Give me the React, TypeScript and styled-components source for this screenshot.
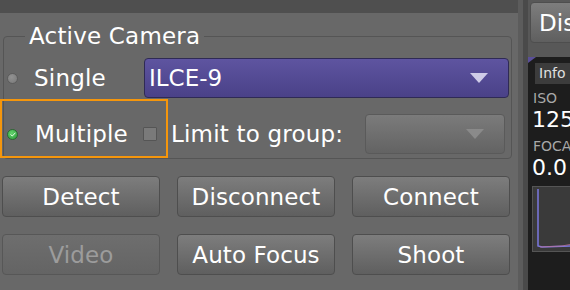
import React from "react";
import styled, { createGlobalStyle, css } from "styled-components";

const Global = createGlobalStyle`
  html, body { margin: 0; padding: 0; overflow: hidden; background: #676767; }
  body { font-family: "DejaVu Sans", "Liberation Sans", sans-serif; }
`;

const Screen = styled.div`
  display: flex;
  width: 570px;
  height: 290px;
  overflow: hidden;
`;

const LeftPanel = styled.div`
  position: relative;
  width: 518px;
  flex: none;
  display: flex;
  flex-direction: column;
  background: #686868;
`;

const TopBar = styled.div`
  height: 13px;
  background: #4f4f4f;
`;

const GroupBox = styled.fieldset`
  margin: 10px 6px 0 3px;
  padding: 9px 2px 4px 3px;
  border: 1px solid #555555;
  border-radius: 4px;
  min-width: 0;
  display: flex;
  flex-direction: column;
  gap: 16px;
`;

const Legend = styled.legend`
  margin-left: 18px;
  padding: 0 4px;
  font-size: 23px;
  line-height: 26px;
  color: #ffffff;
  letter-spacing: 0.2px;
`;

const Row = styled.div`
  display: flex;
  align-items: center;
  height: 40px;
`;

const Radio = styled.span<{ $checked?: boolean }>`
  width: 11px;
  height: 11px;
  border-radius: 50%;
  flex: none;
  box-sizing: border-box;
  display: flex;
  align-items: center;
  justify-content: center;
  ${(p) =>
    p.$checked
      ? css`
          background: radial-gradient(circle at 40% 35%, #62d46c, #2c9a3a);
          border: 1px solid #2a6a30;
        `
      : css`
          background: radial-gradient(circle at 40% 35%, #929292, #787878);
          border: 1px solid #5c5c5c;
        `}
`;

const Label = styled.span<{ $w: number; $ml: number }>`
  width: ${(p) => p.$w}px;
  margin-left: ${(p) => p.$ml}px;
  flex: none;
  font-size: 23px;
  letter-spacing: 0.2px;
  color: #ffffff;
  white-space: nowrap;
`;

const Combo = styled.div<{ $disabled?: boolean; $w?: number }>`
  ${(p) => (p.$w ? `width: ${p.$w}px; flex: none;` : "flex: 1;")}
  height: 40px;
  box-sizing: border-box;
  border-radius: 4px;
  display: flex;
  align-items: center;
  padding: 0 20px 0 4px;
  font-size: 23px;
  color: #ffffff;
  ${(p) =>
    p.$disabled
      ? css`
          background: linear-gradient(#7b7b7b, #636363);
          border: 1px solid #5a5a5a;
        `
      : css`
          background: linear-gradient(#5e54a0, #4a4188);
          border: 1px solid #2f2a55;
        `}
`;

const ComboText = styled.span`
  flex: 1;
`;

const Arrow = styled.span<{ $disabled?: boolean }>`
  width: 0;
  height: 0;
  border-left: 9px solid transparent;
  border-right: 9px solid transparent;
  border-top: 10px solid ${(p) => (p.$disabled ? "#8a8a8a" : "#cfcce8")};
`;

const CheckBox = styled.span`
  width: 14px;
  height: 14px;
  box-sizing: border-box;
  flex: none;
  background: #7a7a7a;
  border: 1px solid #555555;
  border-radius: 1px;
`;

const Highlight = styled.div`
  position: absolute;
  left: 0;
  top: 99px;
  width: 168px;
  height: 59px;
  box-sizing: border-box;
  border: 2px solid #f5960c;
  pointer-events: none;
`;

const ButtonGrid = styled.div`
  display: grid;
  grid-template-columns: repeat(3, 158px);
  grid-auto-rows: 41px;
  column-gap: 17px;
  row-gap: 17px;
  margin: 17px 0 0 2px;
`;

const Button = styled.div<{ $disabled?: boolean }>`
  box-sizing: border-box;
  border-radius: 4px;
  display: flex;
  align-items: center;
  justify-content: center;
  font-size: 23px;
  letter-spacing: 0.1px;
  white-space: nowrap;
  ${(p) =>
    p.$disabled
      ? css`
          background: linear-gradient(#6e6e6e, #646464);
          border: 1px solid #575757;
          color: #9c9c9c;
        `
      : css`
          background: linear-gradient(#7d7d7d, #5f5f5f);
          border: 1px solid #4e4e4e;
          color: #ffffff;
        `}
`;

const Divider = styled.div`
  width: 10px;
  flex: none;
  background: linear-gradient(to right, #5c5c5c 0 5px, #4a4a4a 5px 10px);
`;

const RightPanel = styled.div`
  flex: none;
  width: 120px;
  display: flex;
  flex-direction: column;
  background: #585858;
`;

const TopButton = styled(Button)`
  height: 41px;
  margin: 2px 0 0 2px;
  justify-content: flex-start;
  padding-left: 8px;
`;

const Viewer = styled.div`
  position: relative;
  margin-top: 14px;
  flex: 1;
  background: #1d1d1d;
  display: flex;
  flex-direction: column;
  padding: 6px 0 0 5px;
`;

const Corner = styled.div`
  position: absolute;
  left: 0;
  top: 0;
  width: 0;
  height: 0;
  border-top: 6px solid #5a4f99;
  border-right: 8px solid transparent;
`;

const Tab = styled.div`
  height: 21px;
  margin-left: 2px;
  background: #3c3c3c;
  color: #e0e0e0;
  font-size: 14px;
  line-height: 21px;
  padding-left: 4px;
`;

const Caption = styled.div`
  color: #a8a8a8;
  font-size: 14px;
  line-height: 16px;
  margin-top: 6px;
  white-space: nowrap;
`;

const Value = styled.div`
  color: #ffffff;
  font-size: 22px;
  line-height: 24px;
  margin-top: 2px;
  margin-left: -1px;
`;

const Histo = styled.svg`
  display: block;
  margin-top: 6px;
  margin-left: -1px;
`;

export default function App() {
  return (
    <>
      <Global />
      <Screen>
        <LeftPanel>
          <TopBar />
          <GroupBox>
            <Legend>Active Camera</Legend>
            <Row>
              <Radio />
              <Label $w={110} $ml={16}>Single</Label>
              <Combo>
                <ComboText>ILCE-9</ComboText>
                <Arrow />
              </Combo>
            </Row>
            <Row>
              <Radio $checked>
                <svg width="6" height="5" viewBox="0 0 6 5">
                  <path d="M0.5 2.5 L2.3 4 L5.5 0.7" stroke="#e8ffe8" strokeWidth="1" fill="none" />
                </svg>
              </Radio>
              <Label $w={108} $ml={17}>Multiple</Label>
              <CheckBox />
              <Label $w={194} $ml={14}>Limit to group:</Label>
              <Combo $disabled $w={140}>
                <ComboText />
                <Arrow $disabled />
              </Combo>
            </Row>
          </GroupBox>
          <Highlight />
          <ButtonGrid>
            <Button>Detect</Button>
            <Button>Disconnect</Button>
            <Button>Connect</Button>
            <Button $disabled>Video</Button>
            <Button>Auto Focus</Button>
            <Button>Shoot</Button>
          </ButtonGrid>
        </LeftPanel>
        <Divider />
        <RightPanel>
          <TopButton>Display</TopButton>
          <Viewer>
            <Corner />
            <Tab>Info</Tab>
            <Caption>ISO</Caption>
            <Value>125</Value>
            <Caption>FOCAL</Caption>
            <Value>0.0</Value>
            <Histo width="60" height="66" viewBox="0 0 60 66">
              <rect x="0.5" y="0.5" width="59" height="65" fill="#3a3a3a" stroke="#555" />
              <path d="M6 3 L6 60 L10 61 L40 60 L59 58" stroke="#7b78e0" strokeWidth="1.5" fill="none" />
              <path d="M8 61 L30 60 L45 57 L59 55" stroke="#c07090" strokeWidth="1" fill="none" opacity="0.7" />
            </Histo>
          </Viewer>
        </RightPanel>
      </Screen>
    </>
  );
}
